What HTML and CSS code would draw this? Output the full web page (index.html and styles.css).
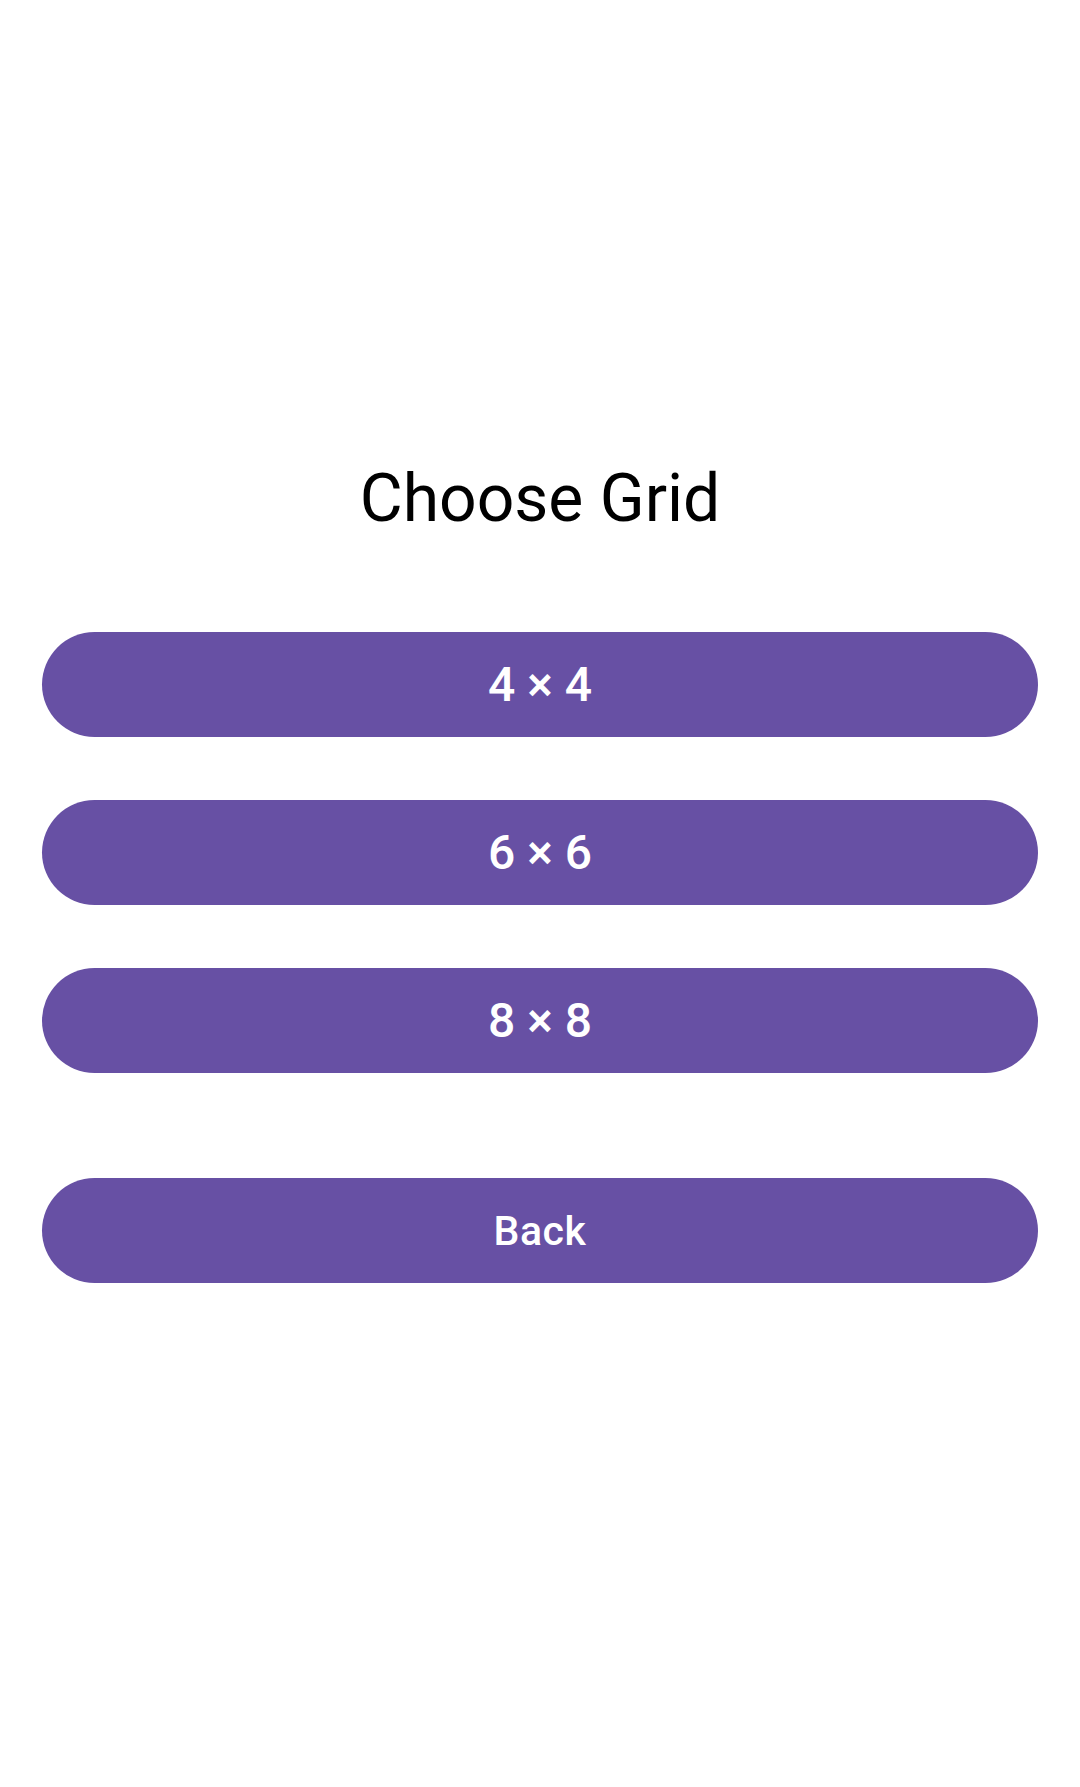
FILE: index.html
```html
<!DOCTYPE html>
<html>
<head>
<meta charset="utf-8">
<link rel="stylesheet" href="styles.css">
</head>
<body>
<main class="screen">
  <h1 class="title">Choose Grid</h1>
  <div class="options">
    <button class="pill grid">4 × 4</button>
    <button class="pill grid">6 × 6</button>
    <button class="pill grid">8 × 8</button>
  </div>
  <button class="pill back">Back</button>
</main>
</body>
</html>
```

FILE: styles.css
```css
html, body {
  margin: 0;
  padding: 0;
  background: #ffffff;
}
.screen {
  width: 1080px;
  height: 1787px;
  box-sizing: border-box;
  padding: 459px 42px 0;
  display: flex;
  flex-direction: column;
  font-family: Roboto, "Noto Sans", sans-serif;
}
.title {
  margin: 0 0 93px;
  text-align: center;
  font-size: 66px;
  line-height: 80px;
  font-weight: 400;
  color: #000000;
}
.options {
  display: flex;
  flex-direction: column;
  gap: 63px;
}
.pill {
  display: block;
  width: 100%;
  height: 105px;
  border: none;
  border-radius: 52.5px;
  background: #6750a4;
  color: #ffffff;
  font-family: Roboto, "Noto Sans", sans-serif;
  font-size: 40px;
  font-weight: 500;
  padding: 0;
  text-align: center;
}
.grid {
  font-size: 48px;
}
.back {
  margin-top: 105px;
  font-size: 41px;
  letter-spacing: 0.6px;
}
```
